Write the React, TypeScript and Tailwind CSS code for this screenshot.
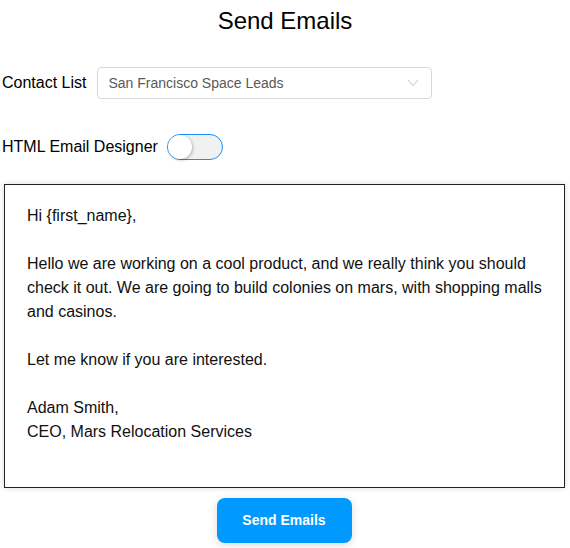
import React, { useState } from 'react';

const EMAIL_LINES = [
  'Hi {first_name},',
  '',
  'Hello we are working on a cool product, and we really think you should check it out. We are going to build colonies on mars, with shopping malls and casinos.',
  '',
  'Let me know if you are interested.',
  '',
  'Adam Smith,',
  'CEO, Mars Relocation Services',
];

const App: React.FC = () => {
  const [htmlDesigner, setHtmlDesigner] = useState(false);

  return (
    <div className="w-[570px] h-[548px] bg-white text-[#111] font-['Liberation_Sans',Arial,sans-serif] overflow-hidden">
      {/* Title */}
      <div className="h-[42px] flex items-center justify-center">
        <h1 className="text-[24px] leading-none text-black">Send Emails</h1>
      </div>

      {/* Contact list */}
      <div className="mt-[25px] flex items-center pl-[2px] gap-[11px]">
        <span className="text-[16px] text-black">Contact List</span>
        <div className="w-[335px] h-[32px] border border-[#d9d9d9] rounded-[4px] flex items-center justify-between pl-[10px] pr-[12px]">
          <span className="text-[14px] text-[#595959]">San Francisco Space Leads</span>
          <svg width="12" height="8" viewBox="0 0 12 8" fill="none">
            <polyline points="1,1 6,6.5 11,1" stroke="#c4c4c4" strokeWidth="1" />
          </svg>
        </div>
      </div>

      {/* Designer toggle */}
      <div className="mt-[35px] flex items-center pl-[2px] gap-[9px]">
        <span className="text-[16px] text-black">HTML Email Designer</span>
        <button
          onClick={() => setHtmlDesigner(!htmlDesigner)}
          className="relative w-[56px] h-[26px] rounded-full border border-[#1890ff] bg-[#f1f1f1]"
        >
          <span
            className={
              htmlDesigner
                ? 'absolute top-0 right-0 w-[24px] h-[24px] rounded-full bg-white shadow-[1px_1px_3px_rgba(0,0,0,0.25)]'
                : 'absolute top-0 left-0 w-[24px] h-[24px] rounded-full bg-white shadow-[1px_1px_3px_rgba(0,0,0,0.25)]'
            }
          />
        </button>
      </div>

      {/* Email body */}
      <div className="mt-[24px] ml-[4px] w-[561px] h-[304px] border border-[#222] shadow-[0_0_6px_rgba(0,0,0,0.15)] pt-[19px] pl-[22px] pr-[18px]">
        {EMAIL_LINES.map((line, i) => (
          <p key={i} className="text-[16px] leading-[24px] min-h-[24px] text-[#111]">
            {line}
          </p>
        ))}
      </div>

      {/* Submit */}
      <div className="mt-[10px] flex justify-center pr-[2px]">
        <button className="w-[135px] h-[45px] rounded-[8px] bg-[#0099ff] text-white text-[14px] font-bold shadow-[0_2px_8px_rgba(0,0,0,0.15)]">
          Send Emails
        </button>
      </div>
    </div>
  );
};

export default App;
